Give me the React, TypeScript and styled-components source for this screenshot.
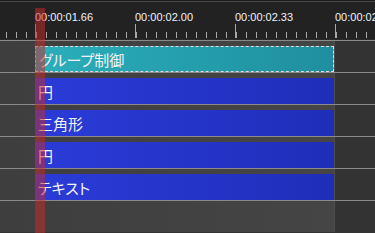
import React from 'react';
import styled, { createGlobalStyle } from 'styled-components';

const GlobalStyle = createGlobalStyle`
	html, body {
		margin: 0;
		padding: 0;
		background: #333333;
		overflow: hidden;
	}
`;

const Timeline = styled.div`
	position: relative;
	width: 375px;
	height: 233px;
	overflow: hidden;
	background: #333333;
`;

const Ruler = styled.div`
	position: relative;
	height: 38px;
	background: #222222;
	border-top: 1px solid #1a1a1a;
	border-bottom: 1px solid #2a2a2a;
	box-shadow: inset 0 1px 0 #4b4b4b;
`;

const Labels = styled.div`
	display: flex;
	padding: 10px 0 0 35px;
	white-space: nowrap;
`;

const Label = styled.span`
	flex: 0 0 100px;
	font-family: 'Liberation Sans', Arial, sans-serif;
	font-size: 11px;
	line-height: 13px;
	color: #eef2ff;
`;

const Ticks = styled.svg`
	position: absolute;
	left: 0;
	bottom: 0;
`;

const Row = styled.div`
	display: flex;
	height: 31px;
	border-top: 1px solid #8a8a8a;
`;

const Lane = styled.div`
	flex: 0 0 335px;
	padding: 5px 0 0 35px;
	box-sizing: border-box;
	background: linear-gradient(to right, #3e3e3e, #454545);
	border-right: 1px solid #4f4f4f;
`;

const Rest = styled.div`
	flex: 1;
	background: #333333;
`;

const Clip = styled.div<{ $kind: 'group' | 'object' }>`
	display: flex;
	align-items: center;
	height: 26px;
	padding-left: 3px;
	box-sizing: border-box;
	font-family: 'Noto Sans CJK JP', 'Liberation Sans', sans-serif;
	font-feature-settings: 'palt';
	font-size: 15px;
	color: #f2f2f2;
	white-space: nowrap;
	overflow: hidden;
	background: ${(p) =>
		p.$kind === 'group'
			? 'linear-gradient(to right, #2aaebb, #1f8f9f)'
			: 'linear-gradient(to right, #2b3bd8, #1f2eb9)'};
	border: ${(p) => (p.$kind === 'group' ? '1px dashed #e8dada' : 'none')};
`;

const Playhead = styled.div`
	position: absolute;
	left: 35px;
	top: 8px;
	width: 10px;
	bottom: 0;
	background: rgba(200, 42, 42, 0.52);
	pointer-events: none;
`;

const labels = ['00:00:01.66', '00:00:02.00', '00:00:02.33', '00:00:02.66'];

const clips: { name: string; kind: 'group' | 'object' }[] = [
	{ name: 'グループ制御', kind: 'group' },
	{ name: '円', kind: 'object' },
	{ name: '三角形', kind: 'object' },
	{ name: '円', kind: 'object' },
	{ name: 'テキスト', kind: 'object' },
];

const RulerTicks = () => {
	const minor = Array.from({ length: 38 }, (_, i) => 6 + i * 10);
	const major = [35, 135, 235, 335];
	return (
		<Ticks width={375} height={16}>
			{minor.map((x) => (
				<line key={x} x1={x + 0.5} x2={x + 0.5} y1={9} y2={15} stroke="#a8a8a8" strokeWidth={1} />
			))}
			{major.map((x) => (
				<line key={'m' + x} x1={x + 0.5} x2={x + 0.5} y1={1} y2={15} stroke="#a8a8a8" strokeWidth={1} />
			))}
		</Ticks>
	);
};

export default function App() {
	return (
		<>
			<GlobalStyle />
			<Timeline>
				<Ruler>
					<Labels>
						{labels.map((l) => (
							<Label key={l}>{l}</Label>
						))}
					</Labels>
					<RulerTicks />
				</Ruler>
				{clips.map((c, i) => (
					<Row key={i}>
						<Lane>
							<Clip $kind={c.kind}>{c.name}</Clip>
						</Lane>
						<Rest />
					</Row>
				))}
				<Row>
					<Lane />
					<Rest />
				</Row>
				<Playhead />
			</Timeline>
		</>
	);
}
